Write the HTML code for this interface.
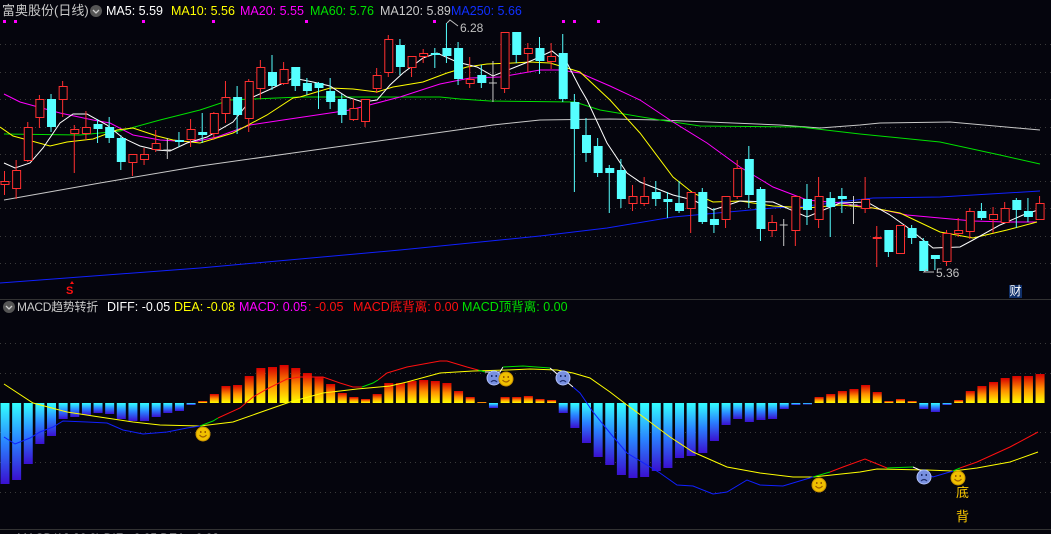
<!DOCTYPE html>
<html><head><meta charset="utf-8"><style>
html,body{margin:0;padding:0;background:#05050d;}
#w{position:relative;width:1051px;height:534px;overflow:hidden;background:#05050d;font-family:"Liberation Sans","Noto Sans CJK SC",sans-serif;}
.t{position:absolute;font-size:12.5px;white-space:nowrap;line-height:14px;}
svg{position:absolute;left:0;top:0;}
</style></head><body><div id="w">
<svg id="s" width="1051" height="534" xmlns="http://www.w3.org/2000/svg"></svg>
<div class="t" style="left:2px;top:4px;color:#c8c8c8;font-size:13px">富奥股份(日线)</div>
<div class="t" style="left:106px;top:4px;color:#fff">MA5: 5.59</div>
<div class="t" style="left:171px;top:4px;color:#ffff00">MA10: 5.56</div>
<div class="t" style="left:240px;top:4px;color:#ff00ff">MA20: 5.55</div>
<div class="t" style="left:310px;top:4px;color:#00e000">MA60: 5.76</div>
<div class="t" style="left:380px;top:4px;color:#c8c8c8">MA120: 5.89</div>
<div class="t" style="left:451px;top:4px;color:#1030ff">MA250: 5.66</div>
<div class="t" style="left:460px;top:21px;color:#c0c0c0;font-size:12px">6.28</div>
<div class="t" style="left:936px;top:266px;color:#c0c0c0;font-size:12px">5.36</div>
<div class="t" style="left:17px;top:300px;color:#c8c8c8;font-size:12px;letter-spacing:-0.3px">MACD趋势转折</div>
<div class="t" style="left:107px;top:300px;color:#fff">DIFF: -0.05</div>
<div class="t" style="left:174px;top:300px;color:#ffff00">DEA: -0.08</div>
<div class="t" style="left:239px;top:300px;color:#ff00ff">MACD: 0.05</div>
<div class="t" style="left:308px;top:300px;color:#ff1010">: -0.05</div>
<div class="t" style="left:353px;top:300px;color:#ff1010">MACD底背离: 0.00</div>
<div class="t" style="left:462px;top:300px;color:#00e000">MACD顶背离: 0.00</div>
<div class="t" style="left:956px;top:486px;color:#ffcc00;font-size:13px">底</div>
<div class="t" style="left:956px;top:510px;color:#ffcc00;font-size:13px">背</div>
<div class="t" style="left:1009px;top:285px;width:13px;height:13px;background:#10306a;color:#fff;font-size:12px;line-height:13px;text-align:center">财</div>
<div class="t" style="left:66px;top:284px;color:#ff1010;font-size:11px;font-weight:bold">S</div>
<div class="t" style="left:17px;top:531px;color:#c8c8c8;font-size:12px">MACD(12,26,9) DIF: -0.05 DEA: -0.08</div>
</div>
<script>
var C=[['r',181,184,171,195],['r',170,188,160,199],['r',127,160,122,162],['r',99,117,95,128],['c',99,127,94,132],['r',86,99,81,117],['r',129,133,125,173],['r',127,133,111,140],['c',124,129,119,143],['c',127,138,117,143],['c',138,162,135,170],['r',154,162,154,176],['r',154,159,148,165],['r',143,149,130,152],['g',150,150,138,159],['c',140,142,132,147],['r',129,139,119,147],['c',132,135,113,143],['r',113,133,112,140],['r',97,113,81,123],['c',97,115,86,134],['r',81,118,79,132],['r',67,88,60,99],['c',72,86,55,90],['r',69,83,62,85],['c',67,86,67,91],['c',83,91,78,95],['c',83,88,82,109],['c',91,102,78,109],['c',99,115,94,123],['r',108,119,99,121],['r',99,121,99,127],['r',75,88,68,93],['r',39,72,35,77],['c',45,67,39,75],['r',56,67,56,77],['r',53,56,49,63],['c',53,55,48,68],['c',48,56,23,63],['c',48,79,42,85],['r',79,83,57,88],['c',75,83,65,88],['g',83,83,61,102],['r',32,88,32,93],['c',32,55,32,63],['r',48,53,43,72],['c',48,61,37,74],['r',56,61,43,69],['c',53,99,34,102],['c',102,129,94,192],['c',135,153,118,162],['c',146,173,138,177],['c',168,173,165,213],['c',170,199,159,208],['r',196,203,185,211],['r',196,203,177,206],['c',192,199,181,206],['c',199,202,192,218],['c',203,211,181,213],['r',192,208,192,233],['c',192,222,188,224],['c',219,225,208,233],['r',196,219,196,228],['r',168,196,160,199],['c',159,195,146,208],['c',189,229,187,241],['r',222,230,215,237],['g',225,225,219,246],['r',196,230,196,246],['c',199,210,184,225],['r',196,219,177,228],['c',198,207,192,237],['c',196,199,188,213],['g',205,205,196,224],['r',199,208,177,213],['r',237,238,226,267],['c',230,252,230,257],['r',225,253,225,253],['c',228,238,225,244],['c',241,271,238,271],['c',255,259,255,270],['r',233,261,230,266],['r',230,233,218,237],['r',211,231,208,239],['c',211,218,203,220],['r',214,219,207,233],['r',208,222,202,223],['c',200,210,198,228],['c',211,217,198,222],['r',203,219,196,219]];
var H=[484,480,464,444,436,419,417,415,413,414,419,421,421,417,413,411,405,401,394,386,385,376,368,367,365,368,373,377,384,393,397,399,394,383,383,381,380,381,383,391,397,402,408,397,397,396,399,400,413,428,443,457,465,475,478,477,471,468,458,456,453,441,425,419,422,420,419,409,405,404.5,397,394,391,389,385,392,401,399,401,409,412,405,400,391,386,382,378,376,376,374];
function X(i){return 4.5+11.63*i;}
var o='<defs><linearGradient id="gp" x1="0" y1="1" x2="0" y2="0"><stop offset="0" stop-color="#ffff00"/><stop offset="0.5" stop-color="#ff9000"/><stop offset="1" stop-color="#d80000"/></linearGradient><linearGradient id="gn" x1="0" y1="0" x2="0" y2="1"><stop offset="0" stop-color="#33ffff"/><stop offset="0.5" stop-color="#2a80ff"/><stop offset="1" stop-color="#3a10d0"/></linearGradient></defs>';
[44,72,99,127,154,181,208,236,263,343,373,432,462,492].forEach(function(y){o+='<line x1="0" x2="1051" y1="'+(y+.5)+'" y2="'+(y+.5)+'" stroke="#3a3a3a" stroke-dasharray="1,4"/>';});
o+='<line x1="0" x2="1051" y1="299.5" y2="299.5" stroke="#333"/><line x1="0" x2="1051" y1="529.5" y2="529.5" stroke="#333"/>';
function pl(p,c,w){return '<polyline fill="none" stroke="'+c+'" stroke-width="'+(w||1)+'" points="'+p+'"/>';}
o+=pl('0,283 200,268 400,250 540,236 607,228 673,217 773,208 807,206 873,198 940,197 1040,191','#1020ff');
o+=pl('4,200 100,183 200,166 300,152 400,138 493,125 540,120 610,119 660,120 780,125 820,128 860,125 880,123 950,122 1040,130','#c8c8c8');
o+=pl('4,134 80,135 120,131 160,120 200,110 230,100 300,97 440,97 460,99 490,101 575,102 600,110 660,120 700,126 800,127 860,134 940,142 1000,155 1040,164','#00e000');
o+=pl('4,94 20,102 60,113 93,120 110,123 133,135 160,140 193,142 217,137 250,125 283,120 310,116 350,110 400,97 440,84 470,78 500,77 540,70 560,70 580,73 610,86 640,100 673,122 707,143 740,167 773,187 807,200 840,203 873,208 907,215 940,218 973,221 1007,222 1037,222','#ff00ff');
o+=pl('0,127 13,136 50,146 67,142 93,139 117,130 133,128 157,136 173,140 200,143 233,133 267,115 293,98 300,97 330,88 353,89 377,92 393,87 423,82 447,73 467,67 487,64 513,63 530,62 550,63 567,68 580,72 610,100 640,133 673,177 693,193 713,202 740,201 773,206 807,208 840,205 873,208 900,213 940,232 973,238 1007,230 1037,222','#ffff00');
o+=pl('4,163 15,168 30,163 43,148 60,123 73,114 87,114 107,125 123,138 140,146 157,150 170,151 187,143 207,137 233,122 253,97 273,88 293,78 313,82 330,86 347,97 363,102 377,100 390,85 403,73 423,58 437,53 457,62 477,67 493,76 513,68 533,60 552,51 567,63 580,88 587,100 607,143 627,173 640,182 673,195 693,200 713,210 740,201 773,202 807,217 840,203 867,202 890,215 907,227 933,248 960,247 973,240 1000,225 1023,215 1038,210','#ffffff');
C.forEach(function(c,i){var x=X(i),col=c[0]=='r'?'#ff3030':c[0]=='c'?'#55ffff':'#c8c8c8';
o+='<line x1="'+x+'" x2="'+x+'" y1="'+c[3]+'" y2="'+c[4]+'" stroke="'+col+'"/>';
if(c[0]=='g'){o+='<line x1="'+(x-4)+'" x2="'+(x+4)+'" y1="'+c[1]+'" y2="'+c[1]+'" stroke="'+col+'"/>';}
else if(c[0]=='r'){o+='<rect x="'+(x-3.5)+'" y="'+(c[1]+.5)+'" width="8" height="'+Math.max(c[2]-c[1],1)+'" fill="#05050d" stroke="'+col+'"/>';}
else{o+='<rect x="'+(x-4)+'" y="'+c[1]+'" width="9" height="'+Math.max(c[2]-c[1],1)+'" fill="'+col+'"/>';}});
[4,15,143,213,306,434,563,574,598].forEach(function(x){o+='<rect x="'+(x-1)+'" y="20" width="3" height="3" fill="#ff00ff"/>';});
o+=pl('447,23 450,20 458,26','#c0c0c0')+pl('934,272 924,272 927,269','#c0c0c0');
o+='<path d="M72 281 L70 284 L74 284 Z" fill="#ff1010"/>';
H.forEach(function(y,i){var x=X(i)-4;if(y<403)o+='<rect x="'+x+'" y="'+y+'" width="9" height="'+(403-y)+'" fill="url(#gp)"/>';else o+='<rect x="'+x+'" y="403" width="9" height="'+Math.max(y-403,1)+'" fill="url(#gn)"/>';});
o+=pl('4,384 33,403 67,412 93,416 133,422 160,425 200,426 233,422 267,410 290,402 323,393 357,389 390,386 407,382 440,373 473,371 507,370 530,369 557,370 573,373 590,378 610,392 627,405 650,422 670,437 693,452 727,467 760,473 793,477 813,477 860,472 877,469 927,470 953,471 977,468 1010,462 1038,452','#ffff00');
o+=pl('4,437 15,444 30,438 40,432 53,427 63,421 87,422 107,423 123,430 143,434 167,432 187,428 200,426','#1020ff');
o+=pl('200,426 213,421 218,418','#00e000');
o+=pl('218,418 240,408 253,397 267,389 287,379 300,377 323,377 340,383 353,387 362,387','#ff1010');
o+=pl('362,387 373,383 378,380','#00e000');
o+=pl('378,380 387,373 407,367 440,361 447,361 467,367 478,370','#ff1010');
o+=pl('478,370 485,372','#00e000');
o+=pl('485,372 500,372 503,367','#ffffff');
o+=pl('503,367 523,366 550,368','#00e000');
o+=pl('550,368 573,387','#ffffff');
o+=pl('573,387 580,393 593,412 610,433 627,453 660,473 677,485 693,486 713,494 727,492 747,480 760,485 783,486 813,477','#1020ff');
o+=pl('813,477 830,472','#00e000');
o+=pl('830,472 843,467 865,459 887,468','#ff1010');
o+=pl('887,468 913,467','#00e000');
o+=pl('913,467 922,471','#ffffff');
o+=pl('922,471 933,477 953,471','#1020ff');
o+=pl('953,471 960,468','#00e000');
o+=pl('960,468 977,462 1010,447 1038,432','#ff1010');
function face(x,y,h){var f=h?'#f0c000':'#7890e0',s=h?'#a06000':'#203070';
return '<circle cx="'+x+'" cy="'+y+'" r="7" fill="'+f+'" stroke="'+(h?'#c89000':'#b0c0f8')+'" stroke-width="1"/><rect x="'+(x-3)+'" y="'+(y-3)+'" width="1.5" height="2" fill="'+s+'"/><rect x="'+(x+1.5)+'" y="'+(y-3)+'" width="1.5" height="2" fill="'+s+'"/>'+(h?'<path d="M'+(x-3.5)+' '+(y+1)+' Q'+x+' '+(y+5)+' '+(x+3.5)+' '+(y+1)+'" fill="none" stroke="'+s+'" stroke-width="1.2"/>':'<path d="M'+(x-3)+' '+(y+4)+' Q'+x+' '+(y+1)+' '+(x+3)+' '+(y+4)+'" fill="none" stroke="'+s+'" stroke-width="1.2"/>');}
o+=face(203,434,1)+face(494,378,0)+face(506,379,1)+face(563,378,0)+face(819,485,1)+face(924,477,0)+face(958,478,1);
o+='<circle cx="96" cy="11" r="6" fill="#555"/><path d="M93 10 L96 13 L99 10" fill="none" stroke="#ccc" stroke-width="1.3"/>';
o+='<circle cx="9" cy="307" r="6" fill="#555"/><path d="M6 306 L9 309 L12 306" fill="none" stroke="#ccc" stroke-width="1.3"/>';
document.getElementById('s').innerHTML=o;
</script>
</body></html>
